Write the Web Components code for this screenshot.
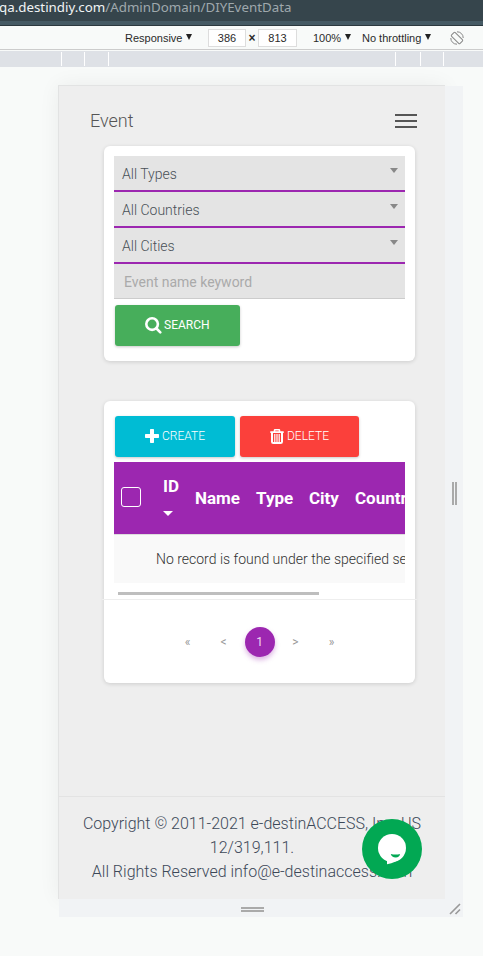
<!DOCTYPE html>
<html lang="en"><head><meta charset="utf-8"><title>Event</title>
<style>html,body{margin:0;height:956px;overflow:hidden;background:#f8faf9}</style></head><body>
<device-shell>
 <url-bar slot="top"></url-bar><device-toolbar slot="top"></device-toolbar><device-ruler slot="top"></device-ruler>
 <event-page></event-page>
</device-shell>
<script>
function define(name, html){
  const t=document.createElement('template');
  t.innerHTML='<style>*{box-sizing:border-box}:host{box-sizing:border-box;display:block}</style>'+html;
  customElements.define(name,class extends HTMLElement{
    constructor(){super();this.attachShadow({mode:'open'}).append(t.content.cloneNode(true));}
  });
}
define('url-bar',`<style>:host{height:26px;background:linear-gradient(#36454c 21px,#455a64 21px);border-bottom:1px solid #2b383e;font:13.33px/14px "Noto Sans",sans-serif;color:#9fa8ac;white-space:nowrap}
b{font-weight:400;color:#f1f4f5}.t{margin-left:-1px}</style>
<div class="t"><b>qa.destindiy.com</b>/AdminDomain/DIYEventData</div>`);
define('tool-menu',`<style>:host{display:flex;align-items:center;gap:4px;white-space:nowrap}svg{margin-top:-1px}</style><slot></slot><svg width="6" height="6"><path d="M0 0H6L3 6Z" fill="#222"/></svg>`);
define('device-toolbar',`<style>:host{height:24px;display:flex;align-items:center;padding-left:125px;border-bottom:1px solid #ccc;font:11px/14px "Liberation Sans",sans-serif;color:#2a2a2a;background:#f8faf9}
.n{width:38px;height:18px;border:1px solid #ddd;background:#fff;text-align:center;line-height:17px}.x{width:12px;text-align:center;font-weight:700;font-size:12px}</style>
<tool-menu style="width:83px">Responsive</tool-menu><div class="n">386</div><div class="x">×</div><div class="n" style="width:39px">813</div>
<tool-menu style="margin-left:16px;width:49px">100%</tool-menu><tool-menu style="width:88px">No throttling</tool-menu>
<svg width="14" height="14" viewBox="0 0 14 14" fill="none" stroke="#888" stroke-width="1"><rect x="4.4" y="1" width="5.2" height="12" rx="1" transform="rotate(-45 7 7)"/><path d="M7 .8A6 6 0 0 1 13.2 7M7 13.2A6 6 0 0 1 .8 7"/></svg>`);
define('device-ruler',`<style>:host{height:16px;margin-top:1px;padding:1px 39px 1px 61px;background:#dee1e6;display:grid;grid-template-columns:23px 24px 287px 25px 23px 1px}i{width:1px;height:14px;background:#fff}</style><i></i><i></i><i></i><i></i><i></i><i></i>`);
define('device-shell',`<style>:host{height:956px;background:#f8faf9;overflow:hidden}
.stage{margin:18px 0 0 58px;display:grid;grid-template-columns:387px 18px;grid-template-rows:814px 18px}
.page{border:1px solid #e2e3e3;border-right:0;border-bottom:0;background:#eee;box-shadow:0 0 20px rgba(0,0,0,.06)}
.r,.b{background:#f1f3f5;display:flex;align-items:center;justify-content:center;position:relative}.r{margin-top:1px}.b{grid-column:1/3;margin-left:1px}
.r i{width:5px;height:23px;border:solid #aaa;border-width:0 2px;margin:2px 0 0 1px}.b i{width:23px;height:5px;border:solid #aaa;border-width:2px 0;margin:2px 0 0 -17px}
svg{position:absolute;right:2px;bottom:2px}</style>
<slot name="top"></slot><div class="stage"><div class="page"><slot></slot></div><div class="r"><i></i></div><div class="b"><i></i><svg width="12" height="12" viewBox="0 0 12 12" stroke="#999" stroke-width="1.6"><path d="M1 11L11 1M6.5 11L11 6.5"/></svg></div></div>`);
define('ui-card',`<style>:host{background:#fff;border-radius:6px;box-shadow:0 1px 4px rgba(0,0,0,.14);width:311px}</style><slot></slot>`);
define('ui-select',`<style>:host{height:36px;background:#e4e4e4;border-bottom:2px solid #9c27b0;display:flex;justify-content:space-between;padding:0 7px 0 8px;font:300 14px/36px Roboto,sans-serif;color:#495057}i{border:4px solid transparent;border-top:5px solid #888;border-bottom:0;height:0;margin-top:12px}</style><span><slot></slot></span><i></i>`);
define('ui-button',`<style>:host{height:41px;border-radius:3px;display:flex;align-items:center;padding-left:30px;gap:3px;font:400 12px/41px Roboto,sans-serif;color:#fff;box-shadow:0 1px 3px rgba(0,0,0,.22);white-space:nowrap}</style><slot name="icon"></slot><span><slot></slot></span>`);
define('data-table',`<style>:host{width:291px;overflow:hidden;font-family:Roboto,sans-serif;white-space:nowrap}
.h{height:72px;background:#9c27b0;color:#fff;font:700 17px/27px Roboto,sans-serif;display:grid;grid-template-columns:42px 32px 61px 53px 46px 80px;align-items:center;padding-left:7px}
.c{width:20px;height:20px;border:1px solid #fff;border-radius:3px;margin-top:-2px}.id{display:flex;flex-direction:column;height:54px;margin-top:3px}.id i{border:5px solid transparent;border-top:5px solid #fff;border-bottom:0;width:0;margin-top:11px}
.r{height:49px;border-top:1px solid #ddd;background:#f9f9f9;padding-left:42px;font:300 14px/49px Roboto,sans-serif;color:#333}.s{width:201px;height:3px;margin:9px 0 0 4px;background:#bebebe}</style>
<div class="h"><div class="c"></div><div class="id">ID<i></i></div><div>Name</div><div>Type</div><div>City</div><div>Country</div></div><div class="r">No record is found under the specified search</div><div class="s"></div>`);
define('page-nav',`<style>:host{display:flex;justify-content:center;gap:6px;font:400 12px/30px Roboto,sans-serif;color:#999}span{width:30px;height:30px;text-align:center}.a{border-radius:50%;background:#9c27b0;color:#eed9f1;box-shadow:0 3px 5px rgba(156,39,176,.35)}</style><span>«</span><span>&lt;</span><span class="a">1</span><span>&gt;</span><span>»</span>`);
define('chat-button',`<style>:host{position:absolute;width:60px;height:60px;left:303px;top:733px}</style><svg width="60" height="60" viewBox="0 0 60 60"><circle cx="30" cy="30" r="30" fill="#02a853"/><circle cx="30" cy="29" r="14" fill="#fff"/><path d="M25 41V45.3Q34 43.5 40 38L36 36Z" fill="#fff"/><path d="M28.8 34.9q5 1.1 9.2 0c-.2 2-1.7 3.6-4.2 3.6-2.8 0-4.5-1.5-5-3.6Z" fill="#02a853"/></svg>`);
define('event-page',`<style>:host{height:813px;position:relative;font-family:Roboto,sans-serif}
header{height:60px;display:flex;justify-content:space-between;padding:23px 28px 0 31px;font:300 18px/24px Roboto,sans-serif;color:#555}
.m{width:22px;height:14px;border:solid #555;border-width:2px 0;margin-top:5px;display:flex;align-items:center}.m i{height:2px;width:22px;background:#555}
ui-card{margin-left:45px}.one{height:215px;padding:10px}.two{height:282px;margin-top:40px;padding-top:15px}
.in{background:#e4e4e4;border-bottom:1px solid #ccc;height:35px;margin-bottom:6px;padding-left:10px;font:400 14px/37px Roboto,sans-serif;color:#aaa}
.row{display:flex;gap:5px;margin:0 0 5px 11px}.row ui-button{font-weight:300}data-table{margin-left:10px}hr{border:0;height:1px;background:#eee;margin:4px -2px 27px}
footer{margin-top:113px;border-top:1px solid #e3e3e3;padding-top:15px;text-align:center;font:300 16px/24px Roboto,sans-serif;color:#3c4858}</style>
<header><span>Event</span><div class="m"><i></i></div></header>
<ui-card class="one"><ui-select>All Types</ui-select><ui-select>All Countries</ui-select><ui-select>All Cities</ui-select><div class="in">Event name keyword</div>
<ui-button style="width:125px;background:#47ae5b;margin-left:1px;gap:2px"><svg slot="icon" width="17" height="17" viewBox="0 0 17 17" fill="none" stroke="#fff" stroke-width="2.6"><circle cx="7.1" cy="7.1" r="5.8"/><path d="M11.5 11.5l3.8 3.8" stroke-linecap="round"/></svg>SEARCH</ui-button></ui-card>
<ui-card class="two"><div class="row"><ui-button style="width:120px;background:#00bcd4"><svg slot="icon" width="14" height="14" viewBox="0 0 14 14" fill="#fff" style="margin-top:-2px"><path d="M5 .7Q5 0 5.7 0H8.3Q9 0 9 .7V5h4.3q.7 0 .7.7v2.6q0 .7-.7.7H9v4.3q0 .7-.7.7H5.7Q5 14 5 13.3V9H.7Q0 9 0 8.3V5.7Q0 5 .7 5H5Z"/></svg>CREATE</ui-button>
<ui-button style="width:119px;background:#fb403b"><svg slot="icon" width="14" height="15" viewBox="0 0 14 15" fill="none" stroke="#fff" style="margin-top:-1px"><path d="M4.5 3V1.6Q4.5.7 5.3.7h3.4q.8 0 .8.9V3M.3 3.1h13.4" stroke-width="1.6"/><path d="M2 3.5v9.2q0 1.3 1.3 1.3h7.4q1.3 0 1.3-1.3V3.5" stroke-width="2"/><path d="M4.8 5v8M7 5v8M9.2 5v8" stroke-width="1.2"/></svg>DELETE</ui-button></div>
<data-table></data-table><hr><page-nav></page-nav></ui-card>
<footer>Copyright © 2011-2021 e-destinACCESS, Inc. US<br>12/319,111.<br>All Rights Reserved info@e-destinaccess.com</footer><chat-button></chat-button>`);
</script></body></html>
